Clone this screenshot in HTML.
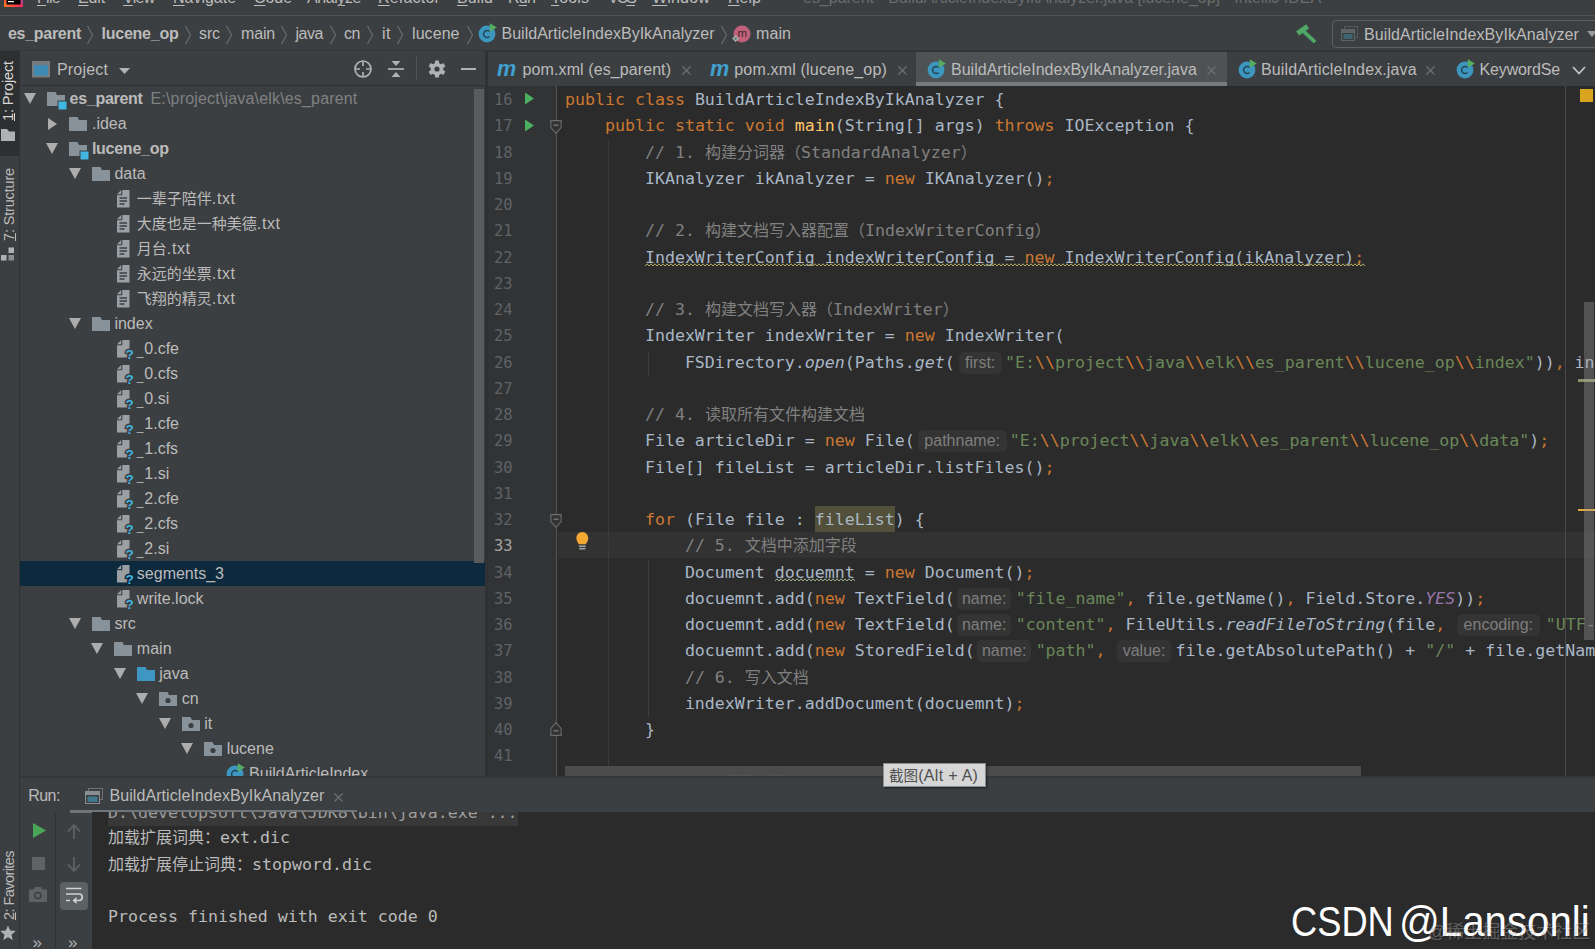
<!DOCTYPE html>
<html lang="zh"><head><meta charset="utf-8"><title>IntelliJ IDEA</title>
<style>
*{box-sizing:border-box;margin:0;padding:0}
html,body{width:1595px;height:949px;overflow:hidden;background:#3c3f41}
body{font-family:"Liberation Sans","Noto Sans CJK SC",sans-serif;font-size:15px;color:#bbbbbb;-webkit-font-smoothing:antialiased}
#app{position:relative;width:1595px;height:949px;overflow:hidden;background:#3c3f41}
.abs{position:absolute}
.t{position:absolute;white-space:nowrap;line-height:20px;height:20px}
svg{position:absolute;overflow:visible}
/* menu */
#menubar{position:absolute;left:0;top:0;width:1595px;height:16px;background:#3c3f41;border-bottom:1px solid #515355;overflow:hidden}
#menubar .t{top:-11.6px;font-size:16px;color:#bbbbbb}
#menubar .title{color:#6e6e6e}
#menubar u{text-decoration-thickness:1px;text-underline-offset:2px}
/* nav */
#nav{position:absolute;left:0;top:17px;width:1595px;height:34px;background:#3c3f41;border-bottom:1px solid #343638}
#nav .t{top:7px;font-size:16px;color:#bbbbbb}
#nav b{font-weight:bold}
/* left stripe */
#lstripe{position:absolute;left:0;top:51px;width:20px;height:898px;background:#3c3f41;border-right:1px solid #323232}
.vt{position:absolute;white-space:nowrap;transform-origin:0 0;transform:rotate(-90deg);font-size:14px;line-height:20px;height:20px;color:#bbbbbb}
/* project panel */
#proj{position:absolute;left:20px;top:51px;width:465px;height:726px;background:#3c3f41;overflow:hidden}
#projhead{position:absolute;left:0;top:0;width:465px;height:35px;border-bottom:1px solid #323232}
.row{position:absolute;left:0;width:465px;height:25px}
.row .t{top:3.3px;font-size:15.5px;line-height:20px;color:#bbbbbb}
.row.sel{background:#0d293e}
.row .dim{color:#787878}
/* editor */
#tabs{position:absolute;left:485px;top:51px;width:1110px;height:35px;background:#3c3f41;border-top:1px solid #323232}
#tabs .t{top:8px;font-size:15.5px;color:#bbbbbb}
#editor{position:absolute;left:485px;top:86px;width:1110px;height:690.6px;background:#2b2b2b;overflow:hidden}
#gutter{position:absolute;left:0px;top:0;width:72px;height:691px;background:#313335}
.ln{position:absolute;left:8.5px;transform:scaleX(0.93);transform-origin:0 0;width:20px;font-family:"DejaVu Sans Mono","Liberation Mono",monospace;font-size:16.6px;line-height:26.25px;height:26.25px;color:#606366;white-space:pre;letter-spacing:0}
.cl{position:absolute;left:80px;white-space:pre;font-family:"DejaVu Sans Mono","Liberation Mono","Noto Sans CJK SC",monospace;font-size:16.6px;line-height:26.25px;height:26.25px;color:#a9b7c6}
.k{color:#cc7832}.s{color:#6a8759}.c{color:#808080}.f{color:#ffc66d}.i{font-style:italic}.p{color:#9876aa;font-style:italic}
.w{text-decoration:underline wavy rgba(174,174,128,0.6);text-decoration-thickness:1px;text-underline-offset:3px}
.h{display:inline-block;vertical-align:top;height:22px;margin-top:2px;line-height:21px;border-radius:5px;background:#343434;color:#7e7e7e;font-family:"Liberation Sans",sans-serif;font-size:16px;text-align:center;white-space:nowrap}
/* run panel */
#run{position:absolute;left:20px;top:776px;width:1575px;height:173px;background:#3c3f41;border-top:2px solid #35383a}
#console{position:absolute;left:72px;top:34px;width:1503px;height:138px;background:#2b2b2b;overflow:hidden}
.co{position:absolute;left:16px;white-space:pre;font-family:"DejaVu Sans Mono","Liberation Mono","Noto Sans CJK SC",monospace;font-size:16.6px;line-height:26px;height:26px;color:#bbbbbb}
.cj{font-size:15px}
.row .t{font-size:16px}
.cc{font-size:16px;font-family:"Liberation Sans","Noto Sans CJK SC",sans-serif}
.hl{background:#52503a;display:inline-block;height:25.25px;vertical-align:top;box-shadow:0 -1px 0 #52503a}
.w2{text-decoration:underline wavy #6f8a5c;text-decoration-thickness:1px;text-underline-offset:3px}
.cn{font-size:16px;font-family:"Liberation Sans","Noto Sans CJK SC",sans-serif}
.cc,.cj,.cn{line-height:0}

</style></head>
<body>
<div id="app">
<div id="menubar">
<svg style="left:4px;top:-12px" width="19" height="19" viewBox="0 0 19 19"><defs><linearGradient id="ijg" x1="0" y1="1" x2="1" y2="0"><stop offset="0" stop-color="#fc801d"/><stop offset="0.45" stop-color="#fe2857"/><stop offset="1" stop-color="#087cfa"/></linearGradient></defs><rect x="0" y="0" width="19" height="19" fill="url(#ijg)"/><rect x="2.5" y="2.5" width="14" height="14" fill="#000"/><rect x="4" y="13" width="6" height="1.2" fill="#fff"/></svg>
<span class="t" style="left:37px;letter-spacing:-0.696px"><u>F</u>ile</span>
<span class="t" style="left:78px;letter-spacing:-0.143px"><u>E</u>dit</span>
<span class="t" style="left:123px;letter-spacing:-0.670px"><u>V</u>iew</span>
<span class="t" style="left:173px;letter-spacing:-0.019px"><u>N</u>avigate</span>
<span class="t" style="left:254px;letter-spacing:-0.063px"><u>C</u>ode</span>
<span class="t" style="left:307px;letter-spacing:-0.418px">Anal<u>y</u>ze</span>
<span class="t" style="left:378px;letter-spacing:0.191px"><u>R</u>efactor</span>
<span class="t" style="left:457px;letter-spacing:0.084px"><u>B</u>uild</span>
<span class="t" style="left:508px;letter-spacing:-0.784px">R<u>u</u>n</span>
<span class="t" style="left:551px;letter-spacing:0.175px"><u>T</u>ools</span>
<span class="t" style="left:608px;letter-spacing:-1.967px">VC<u>S</u></span>
<span class="t" style="left:652px;letter-spacing:0.182px"><u>W</u>indow</span>
<span class="t" style="left:728px;letter-spacing:0.023px"><u>H</u>elp</span>
<span class="t" style="left:803px;font-size:16px;letter-spacing:-0.017px;color:#6b6b6b;">es_parent - BuildArticleIndexByIkAnalyzer.java [lucene_op] - IntelliJ IDEA</span>
</div>
<div id="nav">
<span class="t" style="left:8px;top:7px;font-size:16px;letter-spacing:-0.288px;font-weight:bold;">es_parent</span>
<svg style="left:86px;top:8px" width="8" height="20" viewBox="0 0 8 20"><path d="M1.5 1 L6.5 10 L1.5 19" fill="none" stroke="#6c6f71" stroke-width="1.1"/></svg>
<span class="t" style="left:101.5px;top:7px;font-size:16px;letter-spacing:-0.237px;font-weight:bold;">lucene_op</span>
<svg style="left:183.5px;top:8px" width="8" height="20" viewBox="0 0 8 20"><path d="M1.5 1 L6.5 10 L1.5 19" fill="none" stroke="#6c6f71" stroke-width="1.1"/></svg>
<span class="t" style="left:199px;top:7px;font-size:16px;letter-spacing:-0.110px;">src</span>
<svg style="left:225px;top:8px" width="8" height="20" viewBox="0 0 8 20"><path d="M1.5 1 L6.5 10 L1.5 19" fill="none" stroke="#6c6f71" stroke-width="1.1"/></svg>
<span class="t" style="left:241px;top:7px;font-size:16px;letter-spacing:-0.170px;">main</span>
<svg style="left:280px;top:8px" width="8" height="20" viewBox="0 0 8 20"><path d="M1.5 1 L6.5 10 L1.5 19" fill="none" stroke="#6c6f71" stroke-width="1.1"/></svg>
<span class="t" style="left:295.5px;top:7px;font-size:16px;letter-spacing:-0.463px;">java</span>
<svg style="left:329px;top:8px" width="8" height="20" viewBox="0 0 8 20"><path d="M1.5 1 L6.5 10 L1.5 19" fill="none" stroke="#6c6f71" stroke-width="1.1"/></svg>
<span class="t" style="left:344px;top:7px;font-size:16px;letter-spacing:-0.449px;">cn</span>
<svg style="left:365.5px;top:8px" width="8" height="20" viewBox="0 0 8 20"><path d="M1.5 1 L6.5 10 L1.5 19" fill="none" stroke="#6c6f71" stroke-width="1.1"/></svg>
<span class="t" style="left:382px;top:7px;font-size:16px;letter-spacing:0.500px;">it</span>
<svg style="left:396px;top:8px" width="8" height="20" viewBox="0 0 8 20"><path d="M1.5 1 L6.5 10 L1.5 19" fill="none" stroke="#6c6f71" stroke-width="1.1"/></svg>
<span class="t" style="left:412px;top:7px;font-size:16px;letter-spacing:0.075px;">lucene</span>
<svg style="left:465.5px;top:8px" width="8" height="20" viewBox="0 0 8 20"><path d="M1.5 1 L6.5 10 L1.5 19" fill="none" stroke="#6c6f71" stroke-width="1.1"/></svg>
<svg style="left:478px;top:6px" width="20" height="20" viewBox="0 0 20 20"><circle cx="9" cy="11" r="8.4" fill="#3c96bd"/><path d="M11.6 13.4 A3.5 3.5 0 1 1 11.6 8.6" fill="none" stroke="#1f3b4b" stroke-opacity="0.85" stroke-width="1.5"/><path d="M11.8 0.3 L18.8 4.6 L11.8 8.8 Z" fill="#56ad62"/></svg>
<span class="t" style="left:501.5px;top:7px;font-size:16px;letter-spacing:0.016px;">BuildArticleIndexByIkAnalyzer</span>
<svg style="left:720px;top:8px" width="8" height="20" viewBox="0 0 8 20"><path d="M1.5 1 L6.5 10 L1.5 19" fill="none" stroke="#6c6f71" stroke-width="1.1"/></svg>
<svg style="left:732px;top:7px" width="20" height="20" viewBox="0 0 20 20"><circle cx="10" cy="10" r="8.5" fill="#bf6178"/><text x="10.3" y="13.2" text-anchor="middle" font-family="Liberation Sans,sans-serif" font-size="11.5" fill="#45272f">m</text><path d="M0 14.5 l3.6 -3.4 l3.6 3.4 l-3.6 3.4z" fill="#a9aeb1"/><path d="M2 14.5 l1.6 -1.5 l1.6 1.5 l-1.6 1.5z" fill="#6a6f72"/></svg>
<span class="t" style="left:756px;top:7px;font-size:16px;letter-spacing:0.080px;">main</span>
<svg style="left:1290px;top:1.3px" width="34" height="34" viewBox="1290 17 34 34"><path d="M1297.6 32.4 L1307.7 25.4" stroke="#4fa765" stroke-width="5.2" fill="none"/><path d="M1303.8 30.6 L1315.2 41.2" stroke="#4fa765" stroke-width="3.8" fill="none"/></svg>
<div class="abs" style="left:1332px;top:3px;width:270px;height:28px;border:1px solid #5e6060;border-radius:4px;background:#3c3f41"></div>
<svg style="left:1341px;top:9px" width="18" height="16" viewBox="0 0 18 16"><rect x="3.5" y="0.5" width="13" height="11" fill="none" stroke="#54595b"/><rect x="0.5" y="3.5" width="13" height="11" fill="#3c3f41" stroke="#5d6366"/><rect x="1" y="4" width="12" height="3" fill="#5d6366"/><rect x="2.5" y="8" width="9" height="5" fill="#3d6470"/></svg>
<span class="t" style="left:1364px;top:7.5px;font-size:16px;letter-spacing:0.085px;">BuildArticleIndexByIkAnalyzer</span>
<svg style="left:1587px;top:14px" width="10" height="6" viewBox="0 0 10 6"><path d="M0 0 L10 0 L5 6 Z" fill="#9a9da0"/></svg>
</div>
<div id="lstripe">
<div class="abs" style="left:0;top:0;width:20px;height:105px;background:#2d2f30"></div>
<span class="vt" style="left:-2px;top:70px;font-size:14.5px;letter-spacing:-0.125px;color:#d8d8d8"><u>1</u>: Project</span>
<svg style="left:1px;top:78px" width="14" height="12" viewBox="0 0 14 12"><path d="M0 0 H6 L8 2.5 H14 V12 H0 Z" fill="#afb1b3"/></svg>
<span class="vt" style="left:-1px;top:190px;font-size:14.5px;letter-spacing:-0.163px;color:#bbbbbb"><u>7</u>: Structure</span>
<svg style="left:1px;top:196px" width="14" height="14" viewBox="0 0 14 14"><rect x="0" y="8" width="5.5" height="5.5" fill="#afb1b3"/><rect x="7.5" y="8" width="5.5" height="5.5" fill="#8a8c8e"/><rect x="7.5" y="0.5" width="5.5" height="5.5" fill="#afb1b3"/></svg>
<span class="vt" style="left:-1.5px;top:869px;font-size:14.5px;letter-spacing:-0.563px;color:#bbbbbb"><u>2</u>: Favorites</span>
<svg style="left:-0.5px;top:874px" width="16" height="16" viewBox="0 0 16 16"><path d="M8 0.5 L10.2 5.6 L15.7 6.1 L11.5 9.7 L12.8 15.1 L8 12.2 L3.2 15.1 L4.5 9.7 L0.3 6.1 L5.8 5.6 Z" fill="#afb1b3"/></svg>
</div>
<div id="proj">
<div id="projhead">
<svg style="left:12px;top:10px" width="18" height="17" viewBox="0 0 18 17"><rect x="0" y="0" width="18" height="16.5" fill="#777c80"/><rect x="2" y="4" width="14" height="10.5" fill="#3d8bb3"/></svg>
<span class="t" style="left:37px;top:9.3px;font-size:16px;letter-spacing:0.172px;">Project</span>
<svg style="left:99px;top:17px" width="11" height="6" viewBox="0 0 11 6"><path d="M0 0 H11 L5.5 6 Z" fill="#b2b2b2"/></svg>
<svg style="left:333px;top:8px" width="20" height="20" viewBox="0 0 20 20"><circle cx="10" cy="10" r="8" fill="none" stroke="#afb1b3" stroke-width="1.7"/><path d="M10 2 V7 M10 13 V18 M2 10 H7 M13 10 H18" stroke="#afb1b3" stroke-width="1.7"/></svg>
<svg style="left:368px;top:9px" width="16" height="18" viewBox="0 0 16 18"><path d="M0 9 H16" stroke="#afb1b3" stroke-width="1.7"/><path d="M3.5 1 H12.5 L8 6 Z M3.5 17 H12.5 L8 12 Z" fill="#afb1b3"/></svg>
<div class="abs" style="left:396px;top:5px;width:1px;height:24px;background:#515355"></div>
<svg style="left:408px;top:9px" width="18" height="18" viewBox="-9 -9 18 18"><g fill="#afb1b3"><circle r="6.3"/><rect x="-2" y="-8.6" width="4" height="4" rx="0.6" transform="rotate(0)"/><rect x="-2" y="-8.6" width="4" height="4" rx="0.6" transform="rotate(60)"/><rect x="-2" y="-8.6" width="4" height="4" rx="0.6" transform="rotate(120)"/><rect x="-2" y="-8.6" width="4" height="4" rx="0.6" transform="rotate(180)"/><rect x="-2" y="-8.6" width="4" height="4" rx="0.6" transform="rotate(240)"/><rect x="-2" y="-8.6" width="4" height="4" rx="0.6" transform="rotate(300)"/></g><circle r="2.6" fill="#3c3f41"/></svg>
<div class="abs" style="left:441px;top:17px;width:15px;height:2px;background:#afb1b3"></div>
</div>
<div class="row" style="top:35px">
<svg style="left:4px;top:7px" width="12" height="11" viewBox="0 0 12 11"><path d="M0 0 H12 L6 11 Z" fill="#adadad"/></svg>
<svg style="left:27px;top:5.5px" width="20" height="18" viewBox="0 0 20 18"><path d="M0 0 H8.5 L10 3 H18 V14 H0 Z" fill="#87929a"/><rect x="10.5" y="8.5" width="9" height="9" fill="#3c3f41"/><rect x="11.5" y="9.5" width="8" height="8" fill="#40b6e0"/></svg>
<span class="t" style="left:49.5px;font-weight:bold;letter-spacing:-0.27px;">es_parent</span>
<span class="t" style="left:130.5px;font-size:16px;letter-spacing:0.176px;color:#7f8182;">E:\project\java\elk\es_parent</span>
</div>
<div class="row" style="top:60px">
<svg style="left:27.95px;top:6.5px" width="9" height="12" viewBox="0 0 9 12"><path d="M0 0 L9 6 L0 12 Z" fill="#adadad"/></svg>
<svg style="left:49.45px;top:5.5px" width="20" height="18" viewBox="0 0 20 18"><path d="M0 0 H8.5 L10 3 H18 V14 H0 Z" fill="#87929a"/></svg>
<span class="t" style="left:71.95px;">.idea</span>
</div>
<div class="row" style="top:85px">
<svg style="left:26.45px;top:7px" width="12" height="11" viewBox="0 0 12 11"><path d="M0 0 H12 L6 11 Z" fill="#adadad"/></svg>
<svg style="left:49.45px;top:5.5px" width="20" height="18" viewBox="0 0 20 18"><path d="M0 0 H8.5 L10 3 H18 V14 H0 Z" fill="#87929a"/><rect x="10.5" y="8.5" width="9" height="9" fill="#3c3f41"/><rect x="11.5" y="9.5" width="8" height="8" fill="#40b6e0"/></svg>
<span class="t" style="left:71.95px;font-weight:bold;letter-spacing:-0.27px;">lucene_op</span>
</div>
<div class="row" style="top:110px">
<svg style="left:48.9px;top:7px" width="12" height="11" viewBox="0 0 12 11"><path d="M0 0 H12 L6 11 Z" fill="#adadad"/></svg>
<svg style="left:71.9px;top:5.5px" width="20" height="18" viewBox="0 0 20 18"><path d="M0 0 H8.5 L10 3 H18 V14 H0 Z" fill="#87929a"/></svg>
<span class="t" style="left:94.4px;">data</span>
</div>
<div class="row" style="top:135px">
<svg style="left:96.65px;top:3.8px" width="13" height="18" viewBox="0 0 13 18"><path d="M5.3 0 H12.5 V17.5 H0 V5.3 H5.3 Z" fill="#9aa1a6"/><path d="M0 4.2 L4.2 0 V4.2 Z" fill="#9aa1a6"/><path d="M2.5 8 H10 M2.5 11 H10 M2.5 14 H7.5" stroke="#3c3f41" stroke-width="1.4"/></svg>
<span class="t" style="left:116.85px;"><span class="cj">一辈子陪伴</span><span style="letter-spacing:0.6px">.txt</span></span>
</div>
<div class="row" style="top:160px">
<svg style="left:96.65px;top:3.8px" width="13" height="18" viewBox="0 0 13 18"><path d="M5.3 0 H12.5 V17.5 H0 V5.3 H5.3 Z" fill="#9aa1a6"/><path d="M0 4.2 L4.2 0 V4.2 Z" fill="#9aa1a6"/><path d="M2.5 8 H10 M2.5 11 H10 M2.5 14 H7.5" stroke="#3c3f41" stroke-width="1.4"/></svg>
<span class="t" style="left:116.85px;"><span class="cj">大度也是一种美德</span><span style="letter-spacing:0.6px">.txt</span></span>
</div>
<div class="row" style="top:185px">
<svg style="left:96.65px;top:3.8px" width="13" height="18" viewBox="0 0 13 18"><path d="M5.3 0 H12.5 V17.5 H0 V5.3 H5.3 Z" fill="#9aa1a6"/><path d="M0 4.2 L4.2 0 V4.2 Z" fill="#9aa1a6"/><path d="M2.5 8 H10 M2.5 11 H10 M2.5 14 H7.5" stroke="#3c3f41" stroke-width="1.4"/></svg>
<span class="t" style="left:116.85px;"><span class="cj">月台</span><span style="letter-spacing:0.6px">.txt</span></span>
</div>
<div class="row" style="top:210px">
<svg style="left:96.65px;top:3.8px" width="13" height="18" viewBox="0 0 13 18"><path d="M5.3 0 H12.5 V17.5 H0 V5.3 H5.3 Z" fill="#9aa1a6"/><path d="M0 4.2 L4.2 0 V4.2 Z" fill="#9aa1a6"/><path d="M2.5 8 H10 M2.5 11 H10 M2.5 14 H7.5" stroke="#3c3f41" stroke-width="1.4"/></svg>
<span class="t" style="left:116.85px;"><span class="cj">永远的坐票</span><span style="letter-spacing:0.6px">.txt</span></span>
</div>
<div class="row" style="top:235px">
<svg style="left:96.65px;top:3.8px" width="13" height="18" viewBox="0 0 13 18"><path d="M5.3 0 H12.5 V17.5 H0 V5.3 H5.3 Z" fill="#9aa1a6"/><path d="M0 4.2 L4.2 0 V4.2 Z" fill="#9aa1a6"/><path d="M2.5 8 H10 M2.5 11 H10 M2.5 14 H7.5" stroke="#3c3f41" stroke-width="1.4"/></svg>
<span class="t" style="left:116.85px;"><span class="cj">飞翔的精灵</span><span style="letter-spacing:0.6px">.txt</span></span>
</div>
<div class="row" style="top:260px">
<svg style="left:48.9px;top:7px" width="12" height="11" viewBox="0 0 12 11"><path d="M0 0 H12 L6 11 Z" fill="#adadad"/></svg>
<svg style="left:71.9px;top:5.5px" width="20" height="18" viewBox="0 0 20 18"><path d="M0 0 H8.5 L10 3 H18 V14 H0 Z" fill="#87929a"/></svg>
<span class="t" style="left:94.4px;">index</span>
</div>
<div class="row" style="top:285px">
<svg style="left:96.65px;top:4px" width="20" height="20" viewBox="0 0 20 20"><path d="M5.3 0 H12.5 V17.5 H0 V5.3 H5.3 Z" fill="#9a9fa3"/><path d="M0 4.2 L4.2 0 V4.2 Z" fill="#9a9fa3"/><text x="12.6" y="19" text-anchor="middle" font-family="Liberation Sans,sans-serif" font-weight="bold" font-size="13.5" fill="#40b6e0" stroke="#3c3f41" stroke-width="3.2" stroke-linejoin="round" paint-order="stroke">?</text></svg>
<span class="t" style="left:116.85px;"><span style="font-size:12.2px;letter-spacing:0.7px;position:relative;top:1px">_</span>0.cfe</span>
</div>
<div class="row" style="top:310px">
<svg style="left:96.65px;top:4px" width="20" height="20" viewBox="0 0 20 20"><path d="M5.3 0 H12.5 V17.5 H0 V5.3 H5.3 Z" fill="#9a9fa3"/><path d="M0 4.2 L4.2 0 V4.2 Z" fill="#9a9fa3"/><text x="12.6" y="19" text-anchor="middle" font-family="Liberation Sans,sans-serif" font-weight="bold" font-size="13.5" fill="#40b6e0" stroke="#3c3f41" stroke-width="3.2" stroke-linejoin="round" paint-order="stroke">?</text></svg>
<span class="t" style="left:116.85px;"><span style="font-size:12.2px;letter-spacing:0.7px;position:relative;top:1px">_</span>0.cfs</span>
</div>
<div class="row" style="top:335px">
<svg style="left:96.65px;top:4px" width="20" height="20" viewBox="0 0 20 20"><path d="M5.3 0 H12.5 V17.5 H0 V5.3 H5.3 Z" fill="#9a9fa3"/><path d="M0 4.2 L4.2 0 V4.2 Z" fill="#9a9fa3"/><text x="12.6" y="19" text-anchor="middle" font-family="Liberation Sans,sans-serif" font-weight="bold" font-size="13.5" fill="#40b6e0" stroke="#3c3f41" stroke-width="3.2" stroke-linejoin="round" paint-order="stroke">?</text></svg>
<span class="t" style="left:116.85px;"><span style="font-size:12.2px;letter-spacing:0.7px;position:relative;top:1px">_</span>0.si</span>
</div>
<div class="row" style="top:360px">
<svg style="left:96.65px;top:4px" width="20" height="20" viewBox="0 0 20 20"><path d="M5.3 0 H12.5 V17.5 H0 V5.3 H5.3 Z" fill="#9a9fa3"/><path d="M0 4.2 L4.2 0 V4.2 Z" fill="#9a9fa3"/><text x="12.6" y="19" text-anchor="middle" font-family="Liberation Sans,sans-serif" font-weight="bold" font-size="13.5" fill="#40b6e0" stroke="#3c3f41" stroke-width="3.2" stroke-linejoin="round" paint-order="stroke">?</text></svg>
<span class="t" style="left:116.85px;"><span style="font-size:12.2px;letter-spacing:0.7px;position:relative;top:1px">_</span>1.cfe</span>
</div>
<div class="row" style="top:385px">
<svg style="left:96.65px;top:4px" width="20" height="20" viewBox="0 0 20 20"><path d="M5.3 0 H12.5 V17.5 H0 V5.3 H5.3 Z" fill="#9a9fa3"/><path d="M0 4.2 L4.2 0 V4.2 Z" fill="#9a9fa3"/><text x="12.6" y="19" text-anchor="middle" font-family="Liberation Sans,sans-serif" font-weight="bold" font-size="13.5" fill="#40b6e0" stroke="#3c3f41" stroke-width="3.2" stroke-linejoin="round" paint-order="stroke">?</text></svg>
<span class="t" style="left:116.85px;"><span style="font-size:12.2px;letter-spacing:0.7px;position:relative;top:1px">_</span>1.cfs</span>
</div>
<div class="row" style="top:410px">
<svg style="left:96.65px;top:4px" width="20" height="20" viewBox="0 0 20 20"><path d="M5.3 0 H12.5 V17.5 H0 V5.3 H5.3 Z" fill="#9a9fa3"/><path d="M0 4.2 L4.2 0 V4.2 Z" fill="#9a9fa3"/><text x="12.6" y="19" text-anchor="middle" font-family="Liberation Sans,sans-serif" font-weight="bold" font-size="13.5" fill="#40b6e0" stroke="#3c3f41" stroke-width="3.2" stroke-linejoin="round" paint-order="stroke">?</text></svg>
<span class="t" style="left:116.85px;"><span style="font-size:12.2px;letter-spacing:0.7px;position:relative;top:1px">_</span>1.si</span>
</div>
<div class="row" style="top:435px">
<svg style="left:96.65px;top:4px" width="20" height="20" viewBox="0 0 20 20"><path d="M5.3 0 H12.5 V17.5 H0 V5.3 H5.3 Z" fill="#9a9fa3"/><path d="M0 4.2 L4.2 0 V4.2 Z" fill="#9a9fa3"/><text x="12.6" y="19" text-anchor="middle" font-family="Liberation Sans,sans-serif" font-weight="bold" font-size="13.5" fill="#40b6e0" stroke="#3c3f41" stroke-width="3.2" stroke-linejoin="round" paint-order="stroke">?</text></svg>
<span class="t" style="left:116.85px;"><span style="font-size:12.2px;letter-spacing:0.7px;position:relative;top:1px">_</span>2.cfe</span>
</div>
<div class="row" style="top:460px">
<svg style="left:96.65px;top:4px" width="20" height="20" viewBox="0 0 20 20"><path d="M5.3 0 H12.5 V17.5 H0 V5.3 H5.3 Z" fill="#9a9fa3"/><path d="M0 4.2 L4.2 0 V4.2 Z" fill="#9a9fa3"/><text x="12.6" y="19" text-anchor="middle" font-family="Liberation Sans,sans-serif" font-weight="bold" font-size="13.5" fill="#40b6e0" stroke="#3c3f41" stroke-width="3.2" stroke-linejoin="round" paint-order="stroke">?</text></svg>
<span class="t" style="left:116.85px;"><span style="font-size:12.2px;letter-spacing:0.7px;position:relative;top:1px">_</span>2.cfs</span>
</div>
<div class="row" style="top:485px">
<svg style="left:96.65px;top:4px" width="20" height="20" viewBox="0 0 20 20"><path d="M5.3 0 H12.5 V17.5 H0 V5.3 H5.3 Z" fill="#9a9fa3"/><path d="M0 4.2 L4.2 0 V4.2 Z" fill="#9a9fa3"/><text x="12.6" y="19" text-anchor="middle" font-family="Liberation Sans,sans-serif" font-weight="bold" font-size="13.5" fill="#40b6e0" stroke="#3c3f41" stroke-width="3.2" stroke-linejoin="round" paint-order="stroke">?</text></svg>
<span class="t" style="left:116.85px;"><span style="font-size:12.2px;letter-spacing:0.7px;position:relative;top:1px">_</span>2.si</span>
</div>
<div class="row sel" style="top:510px">
<svg style="left:96.65px;top:4px" width="20" height="20" viewBox="0 0 20 20"><path d="M5.3 0 H12.5 V17.5 H0 V5.3 H5.3 Z" fill="#9a9fa3"/><path d="M0 4.2 L4.2 0 V4.2 Z" fill="#9a9fa3"/><text x="12.6" y="19" text-anchor="middle" font-family="Liberation Sans,sans-serif" font-weight="bold" font-size="13.5" fill="#40b6e0" stroke="#0d293e" stroke-width="3.2" stroke-linejoin="round" paint-order="stroke">?</text></svg>
<span class="t" style="left:116.85px;">segments_3</span>
</div>
<div class="row" style="top:535px">
<svg style="left:96.65px;top:4px" width="20" height="20" viewBox="0 0 20 20"><path d="M5.3 0 H12.5 V17.5 H0 V5.3 H5.3 Z" fill="#9a9fa3"/><path d="M0 4.2 L4.2 0 V4.2 Z" fill="#9a9fa3"/><text x="12.6" y="19" text-anchor="middle" font-family="Liberation Sans,sans-serif" font-weight="bold" font-size="13.5" fill="#40b6e0" stroke="#3c3f41" stroke-width="3.2" stroke-linejoin="round" paint-order="stroke">?</text></svg>
<span class="t" style="left:116.85px;">write.lock</span>
</div>
<div class="row" style="top:560px">
<svg style="left:48.9px;top:7px" width="12" height="11" viewBox="0 0 12 11"><path d="M0 0 H12 L6 11 Z" fill="#adadad"/></svg>
<svg style="left:71.9px;top:5.5px" width="20" height="18" viewBox="0 0 20 18"><path d="M0 0 H8.5 L10 3 H18 V14 H0 Z" fill="#87929a"/></svg>
<span class="t" style="left:94.4px;">src</span>
</div>
<div class="row" style="top:585px">
<svg style="left:71.35px;top:7px" width="12" height="11" viewBox="0 0 12 11"><path d="M0 0 H12 L6 11 Z" fill="#adadad"/></svg>
<svg style="left:94.35px;top:5.5px" width="20" height="18" viewBox="0 0 20 18"><path d="M0 0 H8.5 L10 3 H18 V14 H0 Z" fill="#87929a"/></svg>
<span class="t" style="left:116.85px;">main</span>
</div>
<div class="row" style="top:610px">
<svg style="left:93.8px;top:7px" width="12" height="11" viewBox="0 0 12 11"><path d="M0 0 H12 L6 11 Z" fill="#adadad"/></svg>
<svg style="left:116.8px;top:5.5px" width="20" height="18" viewBox="0 0 20 18"><path d="M0 0 H8.5 L10 3 H18 V14 H0 Z" fill="#3e97c2"/></svg>
<span class="t" style="left:139.3px;">java</span>
</div>
<div class="row" style="top:635px">
<svg style="left:116.25px;top:7px" width="12" height="11" viewBox="0 0 12 11"><path d="M0 0 H12 L6 11 Z" fill="#adadad"/></svg>
<svg style="left:139.25px;top:5.5px" width="20" height="18" viewBox="0 0 20 18"><path d="M0 0 H8.5 L10 3 H18 V14 H0 Z" fill="#87929a"/><circle cx="9" cy="8.5" r="2.6" fill="#3c3f41"/></svg>
<span class="t" style="left:161.75px;">cn</span>
</div>
<div class="row" style="top:660px">
<svg style="left:138.7px;top:7px" width="12" height="11" viewBox="0 0 12 11"><path d="M0 0 H12 L6 11 Z" fill="#adadad"/></svg>
<svg style="left:161.7px;top:5.5px" width="20" height="18" viewBox="0 0 20 18"><path d="M0 0 H8.5 L10 3 H18 V14 H0 Z" fill="#87929a"/><circle cx="9" cy="8.5" r="2.6" fill="#3c3f41"/></svg>
<span class="t" style="left:184.2px;">it</span>
</div>
<div class="row" style="top:685px">
<svg style="left:161.15px;top:7px" width="12" height="11" viewBox="0 0 12 11"><path d="M0 0 H12 L6 11 Z" fill="#adadad"/></svg>
<svg style="left:184.15px;top:5.5px" width="20" height="18" viewBox="0 0 20 18"><path d="M0 0 H8.5 L10 3 H18 V14 H0 Z" fill="#87929a"/><circle cx="9" cy="8.5" r="2.6" fill="#3c3f41"/></svg>
<span class="t" style="left:206.65px;">lucene</span>
</div>
<div class="row" style="top:710px">
<svg style="left:206.1px;top:2px" width="20" height="20" viewBox="0 0 20 20"><circle cx="9" cy="11" r="8.4" fill="#3c96bd"/><path d="M11.6 13.4 A3.5 3.5 0 1 1 11.6 8.6" fill="none" stroke="#1f3b4b" stroke-opacity="0.85" stroke-width="1.5"/><path d="M11.8 0.3 L18.8 4.6 L11.8 8.8 Z" fill="#56ad62"/></svg>
<span class="t" style="left:229.1px;">BuildArticleIndex</span>
</div>
<div class="abs" style="left:454px;top:38px;width:10px;height:474px;background:#595b5d"></div>
</div>
<div id="tabs">
<div class="abs" style="left:431px;top:0;width:311px;height:34px;background:#4e5254"></div>
<div class="abs" style="left:431px;top:30px;width:311px;height:4px;background:#787b7d"></div>
<span class="t" style="left:12px;top:5.5px;font-size:22px;font-weight:bold;font-style:italic;color:#3fa1d0;letter-spacing:0;line-height:22px;height:22px;transform:scaleX(0.98);transform-origin:0 0">m</span>
<span class="t" style="left:37.6px;top:8.3px;font-size:16px;letter-spacing:0.093px;">pom.xml (es_parent)</span>
<svg style="left:196.5px;top:14px" width="9" height="9" viewBox="0 0 9 9"><path d="M0.5 0.5 L8.5 8.5 M8.5 0.5 L0.5 8.5" stroke="#6e7173" stroke-width="1.1"/></svg>
<span class="t" style="left:224.5px;top:5.5px;font-size:22px;font-weight:bold;font-style:italic;color:#3fa1d0;letter-spacing:0;line-height:22px;height:22px;transform:scaleX(0.98);transform-origin:0 0">m</span>
<span class="t" style="left:249.3px;top:8.3px;font-size:16px;letter-spacing:0.173px;">pom.xml (lucene_op)</span>
<svg style="left:412.5px;top:14px" width="9" height="9" viewBox="0 0 9 9"><path d="M0.5 0.5 L8.5 8.5 M8.5 0.5 L0.5 8.5" stroke="#6e7173" stroke-width="1.1"/></svg>
<svg style="left:442px;top:6.5px" width="20" height="20" viewBox="0 0 20 20"><circle cx="9" cy="11" r="8.4" fill="#3c96bd"/><path d="M11.6 13.4 A3.5 3.5 0 1 1 11.6 8.6" fill="none" stroke="#1f3b4b" stroke-opacity="0.85" stroke-width="1.5"/><path d="M11.8 0.3 L18.8 4.6 L11.8 8.8 Z" fill="#56ad62"/></svg>
<span class="t" style="left:466px;top:8.3px;font-size:16px;letter-spacing:0.013px;">BuildArticleIndexByIkAnalyzer.java</span>
<svg style="left:722.3px;top:14px" width="9" height="9" viewBox="0 0 9 9"><path d="M0.5 0.5 L8.5 8.5 M8.5 0.5 L0.5 8.5" stroke="#6e7173" stroke-width="1.1"/></svg>
<svg style="left:752.5px;top:6.5px" width="20" height="20" viewBox="0 0 20 20"><circle cx="9" cy="11" r="8.4" fill="#3c96bd"/><path d="M11.6 13.4 A3.5 3.5 0 1 1 11.6 8.6" fill="none" stroke="#1f3b4b" stroke-opacity="0.85" stroke-width="1.5"/><path d="M11.8 0.3 L18.8 4.6 L11.8 8.8 Z" fill="#56ad62"/></svg>
<span class="t" style="left:776px;top:8.3px;font-size:16px;letter-spacing:0.124px;">BuildArticleIndex.java</span>
<svg style="left:941.1px;top:14px" width="9" height="9" viewBox="0 0 9 9"><path d="M0.5 0.5 L8.5 8.5 M8.5 0.5 L0.5 8.5" stroke="#6e7173" stroke-width="1.1"/></svg>
<svg style="left:970.5px;top:6.5px" width="20" height="20" viewBox="0 0 20 20"><circle cx="9" cy="11" r="8.4" fill="#3c96bd"/><path d="M11.6 13.4 A3.5 3.5 0 1 1 11.6 8.6" fill="none" stroke="#1f3b4b" stroke-opacity="0.85" stroke-width="1.5"/><path d="M11.8 0.3 L18.8 4.6 L11.8 8.8 Z" fill="#56ad62"/></svg>
<div class="abs" style="left:994.5px;top:0;width:81px;height:34px;overflow:hidden"><span class="t" style="left:0px;top:8.3px;font-size:16px;letter-spacing:-0.147px;">KeywordSe</span></div>
<svg style="left:1086.5px;top:14px" width="14" height="9" viewBox="0 0 14 9"><path d="M1 1 L7 7.5 L13 1" fill="none" stroke="#c4c4c4" stroke-width="1.8"/></svg>
</div>
<div id="editor">
<div class="abs" style="left:73px;top:445.8px;width:1037px;height:26.4px;background:#323232"></div>
<div id="gutter"></div>
<div class="abs" style="left:71px;top:0;width:1px;height:691px;background:#555555"></div>
<div class="abs" style="left:1080px;top:0;width:1px;height:691px;background:#4a4a4a"></div>
<div class="abs" style="left:123px;top:54.5px;width:1px;height:700px;background:#3a3a3a"></div>
<div class="abs" style="left:163px;top:473.5px;width:1px;height:157.5px;background:#3d3d3d"></div>
<div class="abs" style="left:163px;top:264.5px;width:1px;height:26.25px;background:#3d3d3d"></div>
<span class="ln" style="top:1px;color:#606366">16</span>
<span class="ln" style="top:27.25px;color:#606366">17</span>
<span class="ln" style="top:53.5px;color:#606366">18</span>
<span class="ln" style="top:79.75px;color:#606366">19</span>
<span class="ln" style="top:106px;color:#606366">20</span>
<span class="ln" style="top:132.25px;color:#606366">21</span>
<span class="ln" style="top:158.5px;color:#606366">22</span>
<span class="ln" style="top:184.75px;color:#606366">23</span>
<span class="ln" style="top:211px;color:#606366">24</span>
<span class="ln" style="top:237.25px;color:#606366">25</span>
<span class="ln" style="top:263.5px;color:#606366">26</span>
<span class="ln" style="top:289.75px;color:#606366">27</span>
<span class="ln" style="top:316px;color:#606366">28</span>
<span class="ln" style="top:342.25px;color:#606366">29</span>
<span class="ln" style="top:368.5px;color:#606366">30</span>
<span class="ln" style="top:394.75px;color:#606366">31</span>
<span class="ln" style="top:421px;color:#606366">32</span>
<span class="ln" style="top:447.25px;color:#a4a3a3">33</span>
<span class="ln" style="top:473.5px;color:#606366">34</span>
<span class="ln" style="top:499.75px;color:#606366">35</span>
<span class="ln" style="top:526px;color:#606366">36</span>
<span class="ln" style="top:552.25px;color:#606366">37</span>
<span class="ln" style="top:578.5px;color:#606366">38</span>
<span class="ln" style="top:604.75px;color:#606366">39</span>
<span class="ln" style="top:631px;color:#606366">40</span>
<span class="ln" style="top:657.25px;color:#606366">41</span>
<span class="ln" style="top:683.5px;color:#606366">42</span>
<svg style="left:39.8px;top:6.4px" width="10" height="13" viewBox="0 0 10 13"><path d="M0 0.4 L9 6.5 L0 12.6 Z" fill="#4ead5f"/></svg>
<svg style="left:39.8px;top:32.65px" width="10" height="13" viewBox="0 0 10 13"><path d="M0 0.4 L9 6.5 L0 12.6 Z" fill="#4ead5f"/></svg>
<svg style="left:65.4px;top:34.25px" width="12" height="14" viewBox="0 0 11.5 14"><path d="M0.6 0.6 H10.9 V7.5 L5.75 13.4 L0.6 7.5 Z" fill="#313335" stroke="#6c6c6c" stroke-width="1.1"/><path d="M3.3 5.2 H8.2" stroke="#8a8a8a" stroke-width="1.1"/></svg>
<svg style="left:65.4px;top:428px" width="12" height="14" viewBox="0 0 11.5 14"><path d="M0.6 0.6 H10.9 V7.5 L5.75 13.4 L0.6 7.5 Z" fill="#313335" stroke="#6c6c6c" stroke-width="1.1"/><path d="M3.3 5.2 H8.2" stroke="#8a8a8a" stroke-width="1.1"/></svg>
<svg style="left:65.4px;top:635.5px" width="12" height="14" viewBox="0 0 11.5 14"><path d="M0.6 13.4 H10.9 V6.5 L5.75 0.6 L0.6 6.5 Z" fill="#313335" stroke="#6c6c6c" stroke-width="1.1"/><path d="M3.3 8.8 H8.2" stroke="#8a8a8a" stroke-width="1.1"/></svg>
<svg style="left:90.7px;top:446px" width="12.6" height="18.5" viewBox="0 0 14 19" preserveAspectRatio="none"><path d="M7 0 C3.2 0 0.4 2.9 0.4 6.4 C0.4 9 2 10.6 3.2 12.6 H10.8 C12 10.6 13.6 9 13.6 6.4 C13.6 2.9 10.8 0 7 0 Z" fill="#f2a832"/><rect x="3.2" y="13.8" width="7.6" height="1.6" fill="#9da0a2"/><rect x="3.6" y="16.3" width="6.8" height="1.7" fill="#9da0a2"/></svg>
<div class="cl" style="top:1px"><span class="k">public class </span>BuildArticleIndexByIkAnalyzer {</div>
<div class="cl" style="top:27.25px">    <span class="k">public static void </span><span class="f">main</span>(String[] args) <span class="k">throws </span>IOException {</div>
<div class="cl" style="top:53.5px">        <span class="c">// 1. <span class="cc">构建分词器（</span>StandardAnalyzer<span class="cc">）</span></span></div>
<div class="cl" style="top:79.75px">        IKAnalyzer ikAnalyzer = <span class="k">new </span>IKAnalyzer()<span class="k">;</span></div>
<div class="cl" style="top:132.25px">        <span class="c">// 2. <span class="cc">构建文档写入器配置（</span>IndexWriterConfig<span class="cc">）</span></span></div>
<div class="cl" style="top:158.5px">        IndexWriterConfig indexWriterConfig = <span class="k">new </span>IndexWriterConfig(ikAnalyzer)<span class="k">;</span></div>
<div class="cl" style="top:211px">        <span class="c">// 3. <span class="cc">构建文档写入器（</span>IndexWriter<span class="cc">）</span></span></div>
<div class="cl" style="top:237.25px">        IndexWriter indexWriter = <span class="k">new </span>IndexWriter(</div>
<div class="cl" style="top:263.5px">            FSDirectory.<span class="i">open</span>(Paths.<span class="i">get</span>(<span class="h" style="width:43px;margin-left:4px;margin-right:3.4px">first:</span><span class="s">"E:</span><span class="k">\\</span><span class="s">project</span><span class="k">\\</span><span class="s">java</span><span class="k">\\</span><span class="s">elk</span><span class="k">\\</span><span class="s">es_parent</span><span class="k">\\</span><span class="s">lucene_op</span><span class="k">\\</span><span class="s">index"</span>))<span class="k">,</span> indexWriterConfig);</div>
<div class="cl" style="top:316px">        <span class="c">// 4. <span class="cc">读取所有文件构建文档</span></span></div>
<div class="cl" style="top:342.25px">        File articleDir = <span class="k">new </span>File(<span class="h" style="width:89px;margin-left:3px;margin-right:3px">pathname:</span><span class="s">"E:</span><span class="k">\\</span><span class="s">project</span><span class="k">\\</span><span class="s">java</span><span class="k">\\</span><span class="s">elk</span><span class="k">\\</span><span class="s">es_parent</span><span class="k">\\</span><span class="s">lucene_op</span><span class="k">\\</span><span class="s">data"</span>)<span class="k">;</span></div>
<div class="cl" style="top:368.5px">        File[] fileList = articleDir.listFiles()<span class="k">;</span></div>
<div class="cl" style="top:421px">        <span class="k">for </span>(File file : <span class="hl">fileList</span>) {</div>
<div class="cl" style="top:447.25px">            <span class="c">// 5. <span class="cc">文档中添加字段</span></span></div>
<div class="cl" style="top:473.5px">            Document docuemnt = <span class="k">new </span>Document()<span class="k">;</span></div>
<div class="cl" style="top:499.75px">            docuemnt.add(<span class="k">new </span>TextField(<span class="h" style="width:54px;margin-left:2.5px;margin-right:4.5px">name:</span><span class="s">"file_name"</span><span class="k">,</span> file.getName()<span class="k">,</span> Field.Store.<span class="p">YES</span>))<span class="k">;</span></div>
<div class="cl" style="top:526px">            docuemnt.add(<span class="k">new </span>TextField(<span class="h" style="width:54px;margin-left:2.5px;margin-right:4.5px">name:</span><span class="s">"content"</span><span class="k">,</span> FileUtils.<span class="i">readFileToString</span>(file<span class="k">,</span> <span class="h" style="width:83px;margin-left:1.5px;margin-right:6px">encoding:</span><span class="s">"UTF-8"</span>))<span class="k">;</span></div>
<div class="cl" style="top:552.25px">            docuemnt.add(<span class="k">new </span>StoredField(<span class="h" style="width:54px;margin-left:2.5px;margin-right:4.5px">name:</span><span class="s">"path"</span><span class="k">,</span> <span class="h" style="width:54px;margin-left:1.5px;margin-right:4.5px">value:</span>file.getAbsolutePath() + <span class="s">"/"</span> + file.getName()))<span class="k">;</span></div>
<div class="cl" style="top:578.5px">            <span class="c">// 6. <span class="cc">写入文档</span></span></div>
<div class="cl" style="top:604.75px">            indexWriter.addDocument(docuemnt)<span class="k">;</span></div>
<div class="cl" style="top:631px">        }</div>
<div class="cl" style="top:683.5px">        <span class="c">// 7. <span class="cc">关闭写入器</span></span></div>
<svg style="left:160px;top:177.2px" width="720" height="4" viewBox="0 0 720 4"><defs><pattern id="wv1" width="4" height="4" patternUnits="userSpaceOnUse"><path d="M0 3 L2 0.8 L4 3" fill="none" stroke="#b3ac62" stroke-width="1"/></pattern></defs><rect width="720" height="4" fill="url(#wv1)"/></svg>
<svg style="left:290px;top:492px" width="80" height="4" viewBox="0 0 80 4"><defs><pattern id="wv2" width="4" height="4" patternUnits="userSpaceOnUse"><path d="M0 3 L2 0.8 L4 3" fill="none" stroke="#9fb08c" stroke-width="1"/></pattern></defs><rect width="80" height="4" fill="url(#wv2)"/></svg>
<div class="abs" style="left:80px;top:679.8px;width:796px;height:10px;background:#4f4f4f;opacity:0.92"></div>
<div class="abs" style="left:1095px;top:3.3px;width:13px;height:12.3px;background:#d9a520"></div>
<div class="abs" style="left:1093px;top:293px;width:17px;height:3px;background:#8f9068"></div>
<div class="abs" style="left:1093px;top:422.5px;width:17px;height:2.5px;background:#e0a93d"></div>
<div class="abs" style="left:1099px;top:216px;width:10px;height:338px;background:#a6a6a6;opacity:0.32"></div>
</div>
<div id="run">
<span class="t" style="left:8.3px;top:8px;font-size:16px;letter-spacing:-0.574px;">Run:</span>
<svg style="left:65px;top:9.5px" width="18" height="16" viewBox="0 0 18 16"><rect x="3.5" y="0.5" width="14" height="11" fill="none" stroke="#6e7275"/><rect x="0.5" y="3.5" width="14" height="12" fill="#3c3f41" stroke="#8a8e91"/><rect x="1" y="4" width="13" height="3" fill="#8a8e91"/><rect x="2.5" y="8.5" width="10" height="5.5" fill="#40788e"/></svg>
<span class="t" style="left:89.4px;top:8px;font-size:16px;letter-spacing:0.085px;">BuildArticleIndexByIkAnalyzer</span>
<svg style="left:313.5px;top:14.5px" width="9" height="9" viewBox="0 0 9 9"><path d="M0.5 0.5 L8.5 8.5 M8.5 0.5 L0.5 8.5" stroke="#6e7173" stroke-width="1.1"/></svg>
<div class="abs" style="left:49.5px;top:32px;width:287px;height:3px;background:#70757a"></div>
<div class="abs" style="left:34.8px;top:35px;width:1px;height:140px;background:#323232"></div>
<svg style="left:12.5px;top:44.7px" width="13" height="15" viewBox="0 0 13 15"><path d="M0 0 L13 7.5 L0 15 Z" fill="#4aa657"/></svg>
<div class="abs" style="left:12px;top:79px;width:12.5px;height:12.5px;background:#606365"></div>
<svg style="left:9px;top:109.2px" width="18" height="15" viewBox="0 0 18 15"><path d="M0 2.5 H4.5 L6 0 H12 L13.5 2.5 H18 V15 H0 Z" fill="#5f6264"/><circle cx="9" cy="8.5" r="3.8" fill="#3c3f41"/><circle cx="9" cy="8.5" r="2.3" fill="#5f6264"/></svg>
<svg style="left:47px;top:45.5px" width="14" height="15" viewBox="0 0 14 15"><path d="M7 15 V1.5 M1 7.5 L7 1.2 L13 7.5" fill="none" stroke="#606365" stroke-width="1.7"/></svg>
<svg style="left:47px;top:78.5px" width="14" height="15" viewBox="0 0 14 15"><path d="M7 0 V13.5 M1 7.5 L7 13.8 L13 7.5" fill="none" stroke="#606365" stroke-width="1.7"/></svg>
<div class="abs" style="left:40px;top:103.6px;width:28px;height:28px;border-radius:4px;background:#5c6164"></div>
<svg style="left:44.5px;top:109.2px" width="18" height="16" viewBox="0 0 18 16"><path d="M1 1.5 H16.5 M1 7 H14 a3 3 0 0 1 0 6.5 H10 M1 13.5 H5" fill="none" stroke="#cfd1d2" stroke-width="1.7"/><path d="M11.5 10 L7.5 13.5 L11.5 17 Z" fill="#cfd1d2"/></svg>
<span class="t" style="left:12.5px;top:155.3px;font-size:17px;color:#afb1b3;">»</span>
<span class="t" style="left:48px;top:155.3px;font-size:17px;color:#afb1b3;">»</span>
<div id="console">
<div class="abs" style="left:16px;top:0;width:410px;height:13.5px;background:#383838"></div>
<div class="co" style="top:-11.65px;color:#9c9c9c">D:\developsoft\Java\JDK8\bin\java.exe ...</div>
<div class="co" style="top:13.3px"><span class="cn">加载扩展词典：</span>ext.dic</div>
<div class="co" style="top:39.55px"><span class="cn">加载扩展停止词典：</span>stopword.dic</div>
<div class="co" style="top:92.05px">Process finished with exit code 0</div>
</div>
</div>
<span class="t" style="left:1291px;top:895.5px;font-size:43px;line-height:50px;height:50px;color:#ffffff;transform:scaleX(0.844);transform-origin:0 0">CSDN</span>
<span class="t" style="left:1399.3px;top:895.5px;font-size:43px;line-height:50px;height:50px;color:#ffffff;transform:scaleX(0.9356);transform-origin:0 0">@Lansonli</span>
<span class="t" style="left:1428px;top:920.5px;font-size:18px;line-height:22px;height:22px;color:#ffffff;opacity:0.24;text-shadow:1px 1px 1px #000">@稀土掘金技术社区</span>
<div class="abs" style="left:485px;top:51px;width:3px;height:726px;background:#2f3133"></div>
<div class="abs" style="left:883.4px;top:763.2px;width:103px;height:24px;background:#d6d6d6;border:1px solid #8e8e8e;box-shadow:1px 1px 2px rgba(0,0,0,.5)"></div>
<span class="t" style="left:889px;top:766.3px;font-size:16px;letter-spacing:0.297px;color:#505050;font-family:"Liberation Sans","Noto Sans CJK SC",sans-serif;"><span style="font-size:14.6px;letter-spacing:0">截图</span>(Alt + A)</span>
</div>
</body></html>
